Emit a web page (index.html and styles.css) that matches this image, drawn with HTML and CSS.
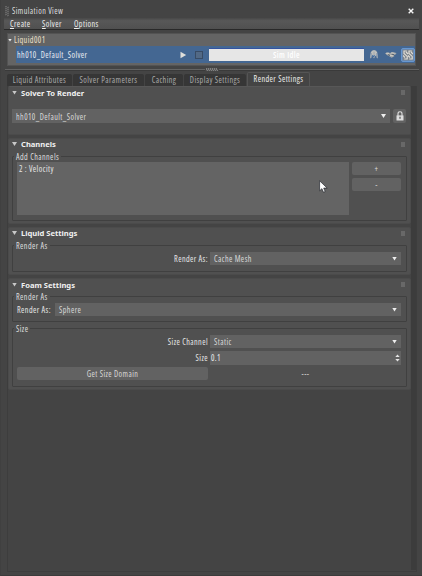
FILE: index.html
```html
<!DOCTYPE html>
<html lang="en">
<head>
<meta charset="utf-8">
<title>Simulation View</title>
<link rel="stylesheet" href="styles.css">
</head>
<body>
<div class="window">
  <header class="titlebar">
    <svg class="grip" width="4" height="11" viewBox="0 0 4 11"><path d="M0 1L2 0M2 2L4 1M0 3L2 2M2 4L4 3M0 5L2 4M2 6L4 5M0 7L2 6M2 8L4 7M0 9L2 8M2 10L4 9" stroke="#858585" stroke-width=".7"/></svg>
    <span class="title">Simulation View</span>
    <svg class="close" width="6" height="6" viewBox="0 0 6 6"><path d="M.7 .7L5.3 5.3M5.3 .7L.7 5.3" stroke="#f4f4f4" stroke-width="1.4"/></svg>
  </header>
  <nav class="menubar"><span class="m1"><u>C</u>reate</span><span class="m2"><u>S</u>olver</span><span class="m3"><u>O</u>ptions</span></nav>
  <section class="tree">
    <div class="root"><i class="tri small"></i><span>Liquid001</span></div>
    <div class="row">
      <span class="name">hh010_Default_Solver</span>
      <svg class="play" width="7" height="8" viewBox="0 0 7 8"><path d="M.5 .8L6.2 4L.5 7.2Z" fill="#dededa"/></svg>
      <i class="stop"></i>
      <div class="progress"><span>Sim Idle</span></div>
      <svg class="ico1" width="10" height="11" viewBox="0 0 10 11"><path d="M1 9.5C1 5 1.5 1.2 5 1S9 5 9 9.5L7.5 8.7L6.8 4.8L6 8L5 9.6L3.9 8L3.3 5L2.5 8.8Z" fill="#9aa4b0"/><path d="M2.2 4C3 1.5 6.5 1 7.8 4M5 2V6.5M3.6 2.6V7M6.5 2.6V7" stroke="#d3cec3" stroke-width=".7" fill="none"/><path d="M3.5 6.2L4.5 8L5.4 6.2" stroke="#3569a6" fill="none"/></svg>
      <svg class="ico2" width="12" height="8" viewBox="0 0 12 8"><path d="M0 2.2L3 1.2L5 2L7.2 1.1L11.5 2.1L10.6 3.6L8.8 4.1L9.4 5.2L6.6 6.7L3.8 4.9L1.8 4Z" fill="#a5a8aa"/><path d="M1 2.2L4 2.5M6 2L9.5 2.3M5 4.3L8 4.8" stroke="#e1ddcf" stroke-width=".7"/><path d="M3 3.6L5 4.5M6.6 3.3L9 3.5" stroke="#414f60" stroke-width=".8"/></svg>
      <div class="active-icon"><svg width="10" height="10" viewBox="0 0 10 10"><path d="M0 0H10V10H0Z" fill="#7b828a"/><path d="M3.8 1H1V3.4L4.2 6.4V9H1.2M8.8 1H6V3.4L9.2 6.4V9H6.2M3 2L5 4M8 2L10 4M0 5.5L2 7.5M5 5.5L7 7.5" fill="none" stroke="#dfdcd5" stroke-width="1.2"/></svg></div>
    </div>
  </section>
  <div class="splitter"><i></i><svg width="12" height="4" viewBox="0 0 12 4"><path d="M0 0L1.5 3M2 0L3.5 3M4 0L5.5 3M6 0L7.5 3M8 0L9.5 3M10 0L11.5 3" stroke="#a6a6a6" stroke-width=".8"/></svg><i></i></div>
  <nav class="tabs">
    <span class="tab t1">Liquid Attributes</span><span class="tab t2">Solver Parameters</span><span class="tab t3">Caching</span><span class="tab t4">Display Settings</span><span class="tab t5 active">Render Settings</span>
  </nav>
  <main class="pane">
    <div class="panels">
      <section class="panel solver">
        <h2><i class="tri"></i><span>Solver To Render</span><i class="handle"></i></h2>
        <div class="solver-row">
          <div class="select"><span>hh010_Default_Solver</span><i class="arrow"></i></div>
          <button class="lock"><svg width="8" height="10" viewBox="0 0 8 10"><path d="M2 5V2.7Q2 .8 4 .8T6 2.7V5" fill="none" stroke="#e2e2e2" stroke-width="1.1"/><path d="M.5 4.4H7.5V9.5H.5Z" fill="#dedede"/><path d="M4 5.7V7.8" stroke="#444" stroke-width="1.1"/></svg></button>
        </div>
      </section>
      <section class="panel channels">
        <h2><i class="tri"></i><span>Channels</span><i class="handle"></i></h2>
        <div class="group"><span class="legend">Add Channels</span>
          <div class="list">2 : Velocity</div>
          <div class="buttons"><button>+</button><button>-</button></div>
        </div>
      </section>
      <section class="panel liquid">
        <h2><i class="tri"></i><span>Liquid Settings</span><i class="handle"></i></h2>
        <div class="group"><span class="legend">Render As</span>
          <div class="field"><label>Render As:</label><div class="select"><span>Cache Mesh</span><i class="arrow"></i></div></div>
        </div>
      </section>
      <section class="panel foam">
        <h2><i class="tri"></i><span>Foam Settings</span><i class="handle"></i></h2>
        <div class="group type"><span class="legend">Render As</span>
          <div class="field"><label>Render As:</label><div class="select"><span>Sphere</span><i class="arrow"></i></div></div>
        </div>
        <div class="group size"><span class="legend">Size</span>
          <div class="field"><label>Size Channel</label><div class="select"><span>Static</span><i class="arrow"></i></div></div>
          <div class="field"><label>Size</label><div class="select spin"><span>0.1</span><svg width="5" height="8" viewBox="0 0 5 8"><path d="M.3 3L2.5 .5L4.7 3ZM.3 5L2.5 7.5L4.7 5Z" fill="#e5e5e5"/></svg></div></div>
          <div class="domain"><button>Get Size Domain</button><span>---</span></div>
        </div>
      </section>
    </div>
    <div class="scrollbar"></div>
  </main>
</div>
<svg class="cursor" width="9" height="14" viewBox="0 0 9 14"><path d="M.6 .8V10.8L2.9 8.7L4.5 12.3L6.2 11.5L4.7 8.1H8.2Z" fill="#fff" stroke="#22252c" stroke-width=".7"/></svg>
</body>
</html>
```

FILE: styles.css
```css
* { box-sizing: border-box; }
body { margin: 0; width: 422px; height: 576px; overflow: hidden; background: #444; color: #dedede; font: 8.1px/10px "Open Sans", "Noto Sans", sans-serif; font-stretch: 86%; letter-spacing: .42px; }
.window { width: 422px; height: 576px; display: flex; flex-direction: column; border-bottom: 1px solid #3b3b3b; border-left: 1px solid #404040; }
span, label { white-space: nowrap; }
svg { display: block; flex: none; }
i { display: block; flex: none; }
button { margin: 0; padding: 1px 0 0; border: 0; border-radius: 2px; background: #626262; color: #d8d8d8; font: inherit; font-stretch: inherit; letter-spacing: inherit; }
.titlebar { height: 18px; display: flex; align-items: center; padding: 4px 8px 0 4px; }
.title { margin-left: 3px; }
.close { margin-left: auto; }
.menubar { height: 12px; margin: 0 3px; display: flex; background: linear-gradient(#484848, #585858 25%, #505050); border-bottom: 1px solid #292929; color: #eee; line-height: 12px; }
.menubar u { text-decoration-thickness: 1px; text-underline-offset: 1px; }
.m1 { margin-left: 6px; width: 32px; }
.m2 { width: 32px; }
.tree { height: 33px; margin: 3px 10px 0 6px; width: 409px; background: #646464; border: 1px solid #535353; }
.root { height: 12px; display: flex; align-items: center; color: #eee0cb; }
.root span { margin-left: 2px; }
.tri { width: 5px; height: 4px; background: #c8c8c8; clip-path: polygon(0 0, 100% 0, 50% 100%); }
.tri.small { width: 4px; height: 3px; background: #eee; }
.row { height: 17px; margin-left: 8px; background: #446792; display: flex; align-items: center; color: #e9edf2; }
.name { margin-left: 1px; width: 163px; }
.stop { width: 8px; height: 8px; margin-left: 8px; border: 1px solid #384b64; background: #526985; }
.progress { width: 155px; height: 13px; margin-left: 6px; background: #e6e6e6; border-top: 1px solid #3453a0; display: flex; align-items: center; justify-content: center; color: #fff; font-weight: 600; }
.ico1 { margin-left: 5px; }
.ico2 { margin-left: 6px; }
.active-icon { width: 14px; height: 14px; margin-left: 4px; border: 1px solid #6797d1; border-radius: 2px; background: #6e89aa; padding: 1px; }
.splitter { height: 7px; margin: 0 3px 0 4px; display: flex; align-items: center; gap: 1px; }
.splitter i { height: 2px; background: #646464; border-bottom: 1px solid #3a3a3a; }
.splitter i:first-child { width: 200px; }
.splitter i:last-child { flex: 1; }
.tabs { height: 13px; margin-left: 6px; display: flex; gap: 1px; align-items: flex-end; }
.tab { height: 12px; line-height: 12px; text-align: center; background: #363636; color: #aaa; border-radius: 2px 2px 0 0; }
.t1 { width: 65px; } .t2 { width: 71px; } .t3 { width: 38px; } .t4 { width: 62px; } .t5 { width: 63px; }
.tab.active { height: 14px; background: #444; color: #eee; border: 1px solid #555; border-bottom: 0; }
.pane { width: 410px; height: 486px; margin-left: 6px; display: flex; justify-content: space-between; border: 1px solid #3d3d3d; border-top: 0; }
.panels { width: 403px; display: flex; flex-direction: column; gap: 3px; }
.panel { background: #505050; border: 1px solid #4b4b4b; border-radius: 2px; padding: 0 3px; }
.panel.solver { height: 49px; border-top-color: #575757; }
.channels { height: 86px; }
.liquid { height: 48px; }
.foam { height: 112px; }
.scrollbar { width: 5px; height: 484px; background: #3c3c3c; }
h2 { height: 11px; margin: 0; padding: 0 2px 0 0; display: flex; align-items: center; font-family: "Noto Sans", sans-serif; font-size: 7.6px; line-height: 10px; font-weight: 700; letter-spacing: 0; color: #f0f0f0; }
.channels h2, .liquid h2 { height: 10px; margin-bottom: 7px; }
h2 span { margin-left: 4px; }
.handle { width: 4px; height: 5px; margin-left: auto; background: #686868; }
.solver-row { display: flex; gap: 3px; margin-top: 11px; }
.select { background: #626262; display: flex; align-items: center; justify-content: space-between; padding: 0 4px 0 4px; height: 13px; color: #d9d9d9; }
.select span, .field label { padding-top: 1px; }
.solver-row .select { width: 378px; height: 14px; }
.arrow { width: 5px; height: 4px; background: #eee; clip-path: polygon(0 0, 100% 0, 50% 100%); }
.lock { width: 13px; height: 14px; padding: 0; display: flex; align-items: center; justify-content: center; }
.group { position: relative; border: 1px solid #404040; border-radius: 1px; margin-top: 6px; width: 395px; }
.legend { position: absolute; left: 1px; top: -5px; padding: 0 2px; background: #505050; color: #dedede; }
.channels .group { height: 65px; display: flex; margin-top: 0; padding: 5px 5px 0 4px; gap: 3px; }
.list { width: 332px; height: 53px; padding: 2px 2px; background: #646464; color: #e7e7e7; }
.buttons { flex: 1; display: flex; flex-direction: column; gap: 3px; }
.buttons button { height: 13px; }
.liquid .group { height: 27px; margin-top: 0; padding: 6px 5px 0 4px; }
.field { display: flex; align-items: center; height: 13px; }
.field label { width: 191px; text-align: right; color: #e7e7e7; }
.field .select { flex: 1; margin-left: 2px; }
.type { height: 26px; padding: 6px 5px 0 4px; }
.type .field label { width: 36px; text-align: left; }
.size { height: 59px; margin-top: 6px; padding: 6px 5px 0 4px; }
.size .field + .field { margin-top: 3px; }
.field .spin { height: 14px; padding: 0 1px 0 1px; color: #eee; }
.domain { display: flex; align-items: center; margin-top: 3px; }
.domain button { width: 191px; height: 13px; }
.domain span { flex: 1; padding: 1px 0 0 2px; text-align: center; }
.cursor { position: absolute; left: 319px; top: 180px; }
```
